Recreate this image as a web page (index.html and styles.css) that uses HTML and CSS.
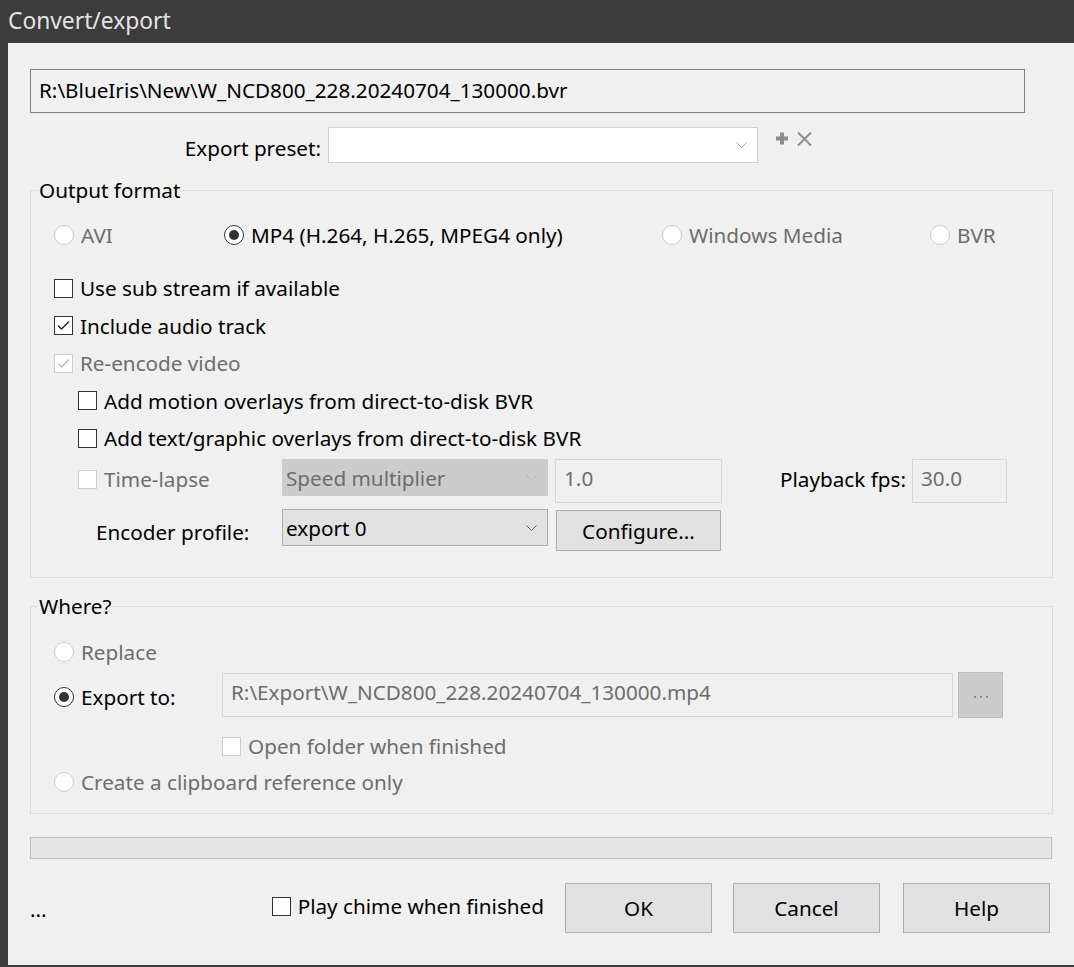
FILE: index.html
```html
<!DOCTYPE html>
<html>
<head>
  <title>Convert/export</title>
  <meta charset="utf-8">
  <link rel="stylesheet" href="styles.css">
</head>
<body>
  <div class="window">
    <div class="titlebar">Convert/export</div>
    <div class="client">
      <div class="source-path">R:\BlueIris\New\W_NCD800_228.20240704_130000.bvr</div>

      <div class="preset-row">
        <span class="preset-label">Export preset:</span>
        <div class="combo combo-white preset-combo">
          <span></span>
          <svg class="chevron" width="11" height="6" viewBox="0 0 11 6"><polyline points="0.5,0.5 5.5,5.5 10.5,0.5"/></svg>
        </div>
        <svg class="preset-icons" width="37" height="16" viewBox="0 0 37 16">
          <rect x="0" y="5.5" width="12" height="4" fill="#8c8c8c"/>
          <rect x="4" y="1.5" width="4" height="12" fill="#8c8c8c"/>
          <path d="M22 1.5 L35 14.5 M35 1.5 L22 14.5" stroke="#8c8c8c" stroke-width="2" fill="none"/>
        </svg>
      </div>

      <!-- Output format -->
      <fieldset class="group group-output">
        <legend>Output format</legend>
        <div class="format-row">
          <label class="opt disabled"><span class="radio"></span>AVI</label>
          <label class="opt"><span class="radio on"></span>MP4 (H.264, H.265, MPEG4 only)</label>
          <label class="opt disabled"><span class="radio"></span>Windows Media</label>
          <label class="opt disabled"><span class="radio"></span>BVR</label>
        </div>
        <div class="check-row first">
          <label class="opt"><span class="box"></span>Use sub stream if available</label>
        </div>
        <div class="check-row">
          <label class="opt"><span class="box"><svg width="17" height="17" viewBox="0 0 17 17"><polyline points="3,8.5 6.5,12 14,4.5"/></svg></span>Include audio track</label>
        </div>
        <div class="check-row">
          <label class="opt disabled"><span class="box"><svg width="17" height="17" viewBox="0 0 17 17"><polyline points="3,8.5 6.5,12 14,4.5"/></svg></span>Re-encode video</label>
        </div>
        <div class="check-row indent">
          <label class="opt"><span class="box"></span>Add motion overlays from direct-to-disk BVR</label>
        </div>
        <div class="check-row indent">
          <label class="opt"><span class="box"></span>Add text/graphic overlays from direct-to-disk BVR</label>
        </div>

        <div class="timelapse-row">
          <label class="opt disabled lead"><span class="box"></span>Time-lapse</label>
          <div class="combo combo-disabled">
            <span>Speed multiplier</span>
            <svg class="chevron" width="11" height="6" viewBox="0 0 11 6"><polyline points="0.5,0.5 5.5,5.5 10.5,0.5"/></svg>
          </div>
          <div class="edit edit-disabled speed-edit">1.0</div>
          <span class="fps-label">Playback fps:</span>
          <div class="edit edit-disabled fps-edit">30.0</div>
        </div>

        <div class="encoder-row">
          <span class="encoder-label">Encoder profile:</span>
          <div class="combo combo-grey">
            <span>export 0</span>
            <svg class="chevron" width="11" height="6" viewBox="0 0 11 6"><polyline points="0.5,0.5 5.5,5.5 10.5,0.5"/></svg>
          </div>
          <button class="btn configure-btn">Configure...</button>
        </div>
      </fieldset>

      <!-- Where? -->
      <fieldset class="group group-where">
        <legend>Where?</legend>
        <div class="replace-row">
          <label class="opt disabled"><span class="radio"></span>Replace</label>
        </div>
        <div class="export-row">
          <label class="opt lead"><span class="radio on"></span>Export to:</label>
          <div class="edit edit-disabled export-edit">R:\Export\W_NCD800_228.20240704_130000.mp4</div>
          <button class="btn btn-disabled browse-btn">
            <svg width="14" height="4" viewBox="0 0 14 4"><rect x="0" y="1" width="2" height="2"/><rect x="6" y="1" width="2" height="2"/><rect x="12" y="1" width="2" height="2"/></svg>
          </button>
        </div>
        <div class="folder-row">
          <label class="opt disabled"><span class="box"></span>Open folder when finished</label>
        </div>
        <div class="clipboard-row">
          <label class="opt disabled"><span class="radio"></span>Create a clipboard reference only</label>
        </div>
      </fieldset>

      <div class="progress"></div>

      <div class="bottom-row">
        <span class="status">...</span>
        <label class="opt"><span class="box"></span>Play chime when finished</label>
        <div class="buttons">
          <button class="btn dlg-btn">OK</button>
          <button class="btn dlg-btn">Cancel</button>
          <button class="btn dlg-btn">Help</button>
        </div>
      </div>
    </div>
  </div>
</body>
</html>
```

FILE: styles.css
```css
/* Convert/export dialog */

* {
  box-sizing: border-box;
}

body {
  margin: 0;
  background-color: #3c3c3c;
  font-family: "Noto Sans", "Open Sans", sans-serif;
  font-size: 20.7px;
  color: #000;
}

.window {
  width: 1074px;
  height: 967px;
}

.titlebar {
  height: 43px;
  padding-left: 8px;
  line-height: 42px;
  font-size: 22.8px;
  color: #e4e4e4;
}

.client {
  margin-left: 8px;
  height: 922px;
  background-color: #f0f0f0;
  padding: 26px 21px 0 22px;
}

.source-path {
  width: 995px;
  height: 44px;
  border: 1px solid #808080;
  padding-left: 8px;
  line-height: 40px;
  white-space: nowrap;
}

/* preset */

.preset-row {
  display: flex;
  align-items: center;
  height: 36px;
  margin-top: 14px;
}

.preset-label {
  width: 291px;
  margin-right: 7px;
  text-align: right;
  padding-top: 6px;
}

.preset-combo {
  width: 430px;
}

.preset-icons {
  align-self: flex-start;
  margin-left: 18px;
  margin-top: 4px;
}

/* combos, edits, buttons */

.combo {
  display: flex;
  justify-content: space-between;
  align-items: center;
  height: 36px;
  padding: 0 10px 0 3px;
  border: 1px solid #cccccc;
  white-space: nowrap;
}

.combo .chevron {
  fill: none;
  stroke: #606060;
  stroke-width: 1;
}

.combo-white {
  background-color: #fff;
  border-color: #d0d0d0;
}

.combo-white .chevron {
  stroke: #a0a0a0;
}

.combo-disabled {
  width: 266px;
  height: 37px;
  background-color: #cccccc;
  color: #6d6d6d;
}

.combo-disabled .chevron {
  stroke: #b0b0b0;
}

.combo-grey {
  width: 266px;
  height: 37px;
  background-color: #e1e1e1;
  border-color: #adadad;
}

.edit {
  height: 44px;
  padding-left: 8px;
  line-height: 36px;
  white-space: nowrap;
}

.edit-disabled {
  border: 1px solid #d6d6d6;
  background-color: #f0f0f0;
  color: #6d6d6d;
}

.btn {
  font-family: inherit;
  font-size: inherit;
  color: #000;
  background-color: #e1e1e1;
  border: 1px solid #adadad;
  padding: 0;
  cursor: pointer;
}

.btn-disabled {
  background-color: #cccccc;
  border-color: #bcbcbc;
}

/* group boxes */

.group {
  margin: 14px 0 0;
  padding: 0 0 26px;
  border: 1px solid #dcdcdc;
  min-width: 0;
}

.group legend {
  margin-left: 7px;
  padding: 0 1px;
  line-height: 26px;
}

.group-where {
  margin-top: 15px;
  padding-bottom: 12px;
}

/* radio + checkbox */

.opt {
  display: flex;
  align-items: center;
  gap: 7px;
  white-space: nowrap;
}

.opt.disabled {
  color: #6d6d6d;
}

.radio {
  position: relative;
  flex: none;
  width: 20px;
  height: 20px;
  border: 1px solid #333;
  border-radius: 50%;
  background-color: #fff;
}

.radio.on::after {
  content: "";
  position: absolute;
  left: 4px;
  top: 4px;
  width: 10px;
  height: 10px;
  border-radius: 50%;
  background-color: #333;
}

.box {
  display: flex;
  align-items: center;
  justify-content: center;
  flex: none;
  width: 19px;
  height: 19px;
  border: 1px solid #333;
  background-color: #fff;
}

.box svg {
  fill: none;
  stroke: #222;
  stroke-width: 1.4;
}

.disabled .radio,
.disabled .box {
  border-color: #cccccc;
}

.disabled .box svg {
  stroke: #bdbdbd;
}

/* output format rows */

.format-row {
  display: grid;
  grid-template-columns: 170px 438px 268px auto;
  align-items: center;
  height: 38px;
  margin-top: 13px;
  padding-left: 23px;
}

.check-row {
  display: flex;
  align-items: center;
  height: 37.5px;
  padding-left: 23px;
}

.check-row.first {
  margin-top: 15.25px;
}

.check-row.indent {
  padding-left: 47px;
}

.timelapse-row {
  display: flex;
  align-items: flex-start;
  height: 44px;
  margin-top: 2.25px;
  padding-left: 47px;
}

.timelapse-row .lead {
  width: 204px;
  height: 40px;
}

.speed-edit {
  width: 167px;
  margin-left: 7px;
}

.fps-label {
  width: 190px;
  padding-right: 6px;
  text-align: right;
  line-height: 40px;
}

.fps-edit {
  width: 95px;
}

.encoder-row {
  display: flex;
  align-items: flex-start;
  height: 42px;
  margin-top: 6px;
  padding-left: 65px;
}

.encoder-label {
  width: 186px;
  line-height: 46px;
}

.configure-btn {
  width: 165px;
  height: 41px;
  margin-left: 8px;
  margin-top: 1px;
}

/* where rows */

.replace-row {
  display: flex;
  align-items: center;
  height: 36px;
  margin-top: 15px;
  padding-left: 23px;
}

.export-row {
  display: flex;
  align-items: center;
  height: 50px;
  padding-left: 23px;
}

.export-row .lead {
  width: 168px;
  padding-top: 4px;
}

.export-edit {
  width: 731px;
}

.browse-btn {
  display: flex;
  align-items: center;
  justify-content: center;
  width: 45px;
  height: 46px;
  margin-left: 5px;
  padding-top: 4px;
  fill: #8a8a8a;
}

.folder-row {
  display: flex;
  align-items: center;
  height: 34px;
  margin-top: 9px;
  padding-left: 191px;
}

.clipboard-row {
  display: flex;
  align-items: center;
  height: 38px;
  padding-left: 23px;
}

/* progress + footer */

.progress {
  width: 1022px;
  height: 22px;
  margin-top: 23px;
  border: 1px solid #bcbcbc;
  background-color: #e6e6e6;
}

.bottom-row {
  display: flex;
  align-items: center;
  height: 50px;
  margin-top: 24px;
  padding-right: 3px;
}

.status {
  width: 243px;
  padding-top: 2px;
}

.bottom-row .opt {
  margin-top: -4px;
}

.buttons {
  display: flex;
  margin-left: auto;
}

.dlg-btn {
  width: 147px;
  height: 50px;
  margin-left: 21px;
}

.dlg-btn:last-child {
  margin-left: 23px;
}
```
